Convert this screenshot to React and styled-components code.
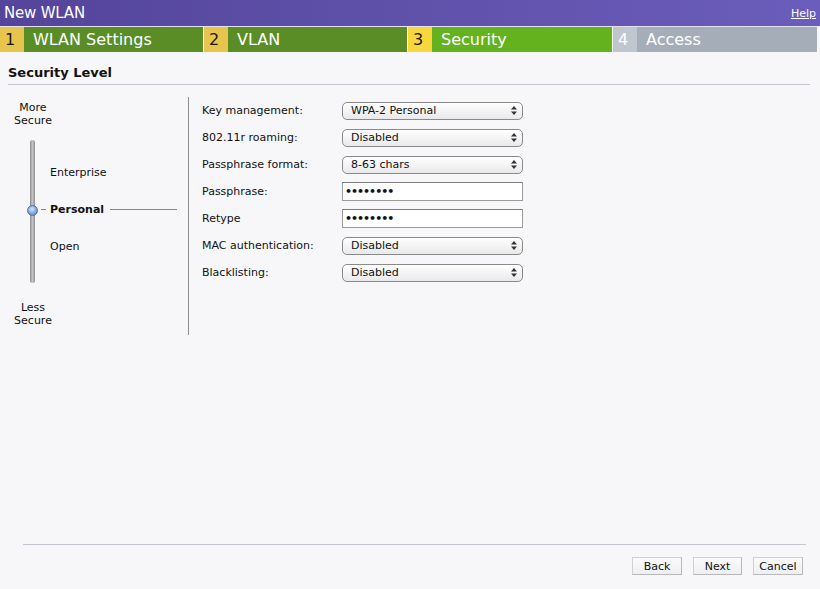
import styled, { createGlobalStyle } from 'styled-components';

const GlobalStyle = createGlobalStyle`
    html, body {
        margin: 0;
        padding: 0;
        background: #f7f7f9;
    }
    body {
        font-family: 'DejaVu Sans', Verdana, sans-serif;
        color: #111;
    }
`;

const Page = styled.div`
    display: flex;
    flex-direction: column;
    height: 589px;
    width: 820px;
    background: #f7f7f9;
`;

const TitleBar = styled.div`
    display: flex;
    align-items: center;
    justify-content: space-between;
    height: 26px;
    padding: 0 4px 0 4px;
    background: linear-gradient(to right, #54449a, #6b5dbb);
    border-bottom: 1px solid #e4e2ee;
    color: #fff;
`;

const Title = styled.div`
    font-size: 15px;
    letter-spacing: -0.2px;
`;

const HelpLink = styled.a`
    font-size: 11px;
    color: #fff;
    text-decoration: underline;
`;

const Steps = styled.div`
    display: grid;
    grid-template-columns: 203px 203px 204px 204px;
    column-gap: 1px;
    width: 817px;
    height: 24px;
    background: #fff;
`;

const stepColors = {
    done: { num: '#e7c44b', numText: '#1a1a1a', label: '#5b8d27' },
    active: { num: '#f7d73c', numText: '#1a1a1a', label: '#64b31e' },
    todo: { num: '#bfc6ce', numText: '#fff', label: '#a5aeb8' },
};

const Step = styled.div`
    display: flex;
    font-size: 16px;
    line-height: 25px;
    color: #fff;
    background: ${(p) => stepColors[p.$state].label};
`;

const StepNum = styled.span`
    width: 24px;
    padding-left: 5px;
    box-sizing: border-box;
    background: ${(p) => stepColors[p.$state].num};
    color: ${(p) => stepColors[p.$state].numText};
`;

const StepLabel = styled.span`
    padding-left: 9px;
`;

const Content = styled.div`
    flex: 1;
`;

const SectionTitle = styled.div`
    margin: 0 10px 0 8px;
    padding: 14px 0 3px;
    line-height: 16px;
    font-size: 13px;
    font-weight: bold;
    border-bottom: 1px solid #c3c6d2;
`;

const Main = styled.div`
    display: flex;
    margin-top: 12px;
`;

const LevelPanel = styled.div`
    display: flex;
    flex-direction: column;
    width: 188px;
    height: 238px;
    border-right: 1px solid #8c8c8c;
    font-size: 11px;
`;

const Caption = styled.div`
    width: 66px;
    text-align: center;
    line-height: 13px;
    margin-top: ${(p) => p.$top}px;
`;

const Slider = styled.div`
    display: flex;
    margin-top: 13px;
`;

const Track = styled.div`
    position: relative;
    margin-left: 30px;
    width: 5px;
    height: 143px;
    border-radius: 3px;
    background: linear-gradient(to right, #8e8e8e, #c4c4c4 50%, #8e8e8e);
`;

const Knob = styled.div`
    position: absolute;
    left: -3px;
    top: 65px;
    width: 9px;
    height: 9px;
    border-radius: 50%;
    border: 1px solid #4a6ea6;
    background: radial-gradient(circle at 45% 35%, #d6e6fb, #7ea8e3 55%, #4f7fc4);
`;

const Levels = styled.div`
    display: flex;
    flex-direction: column;
    padding-top: 14px;
`;

const Level = styled.div`
    display: flex;
    align-items: center;
    height: 37px;
    padding-left: ${(p) => (p.$active ? 6 : 15)}px;
    font-weight: ${(p) => (p.$active ? 'bold' : 'normal')};
`;

const Tick = styled.span`
    width: ${(p) => p.$w}px;
    height: 1px;
    background: #8a8a8a;
    margin: 0 ${(p) => p.$mr}px 0 ${(p) => p.$ml}px;
`;

const Form = styled.div`
    display: grid;
    grid-template-columns: 140px 181px;
    grid-auto-rows: 27px;
    align-items: center;
    margin-left: 13px;
    margin-top: 0;
    font-size: 11px;
`;

const Select = styled.div`
    display: flex;
    align-items: center;
    justify-content: space-between;
    height: 18px;
    box-sizing: border-box;
    padding: 0 5px 0 8px;
    border: 1px solid #8a8a8a;
    border-radius: 5px;
    background: linear-gradient(#ffffff, #e9e9eb);
    color: #111;
`;

const TextBox = styled.div`
    height: 19px;
    box-sizing: border-box;
    padding-left: 2px;
    border: 1px solid #9a9a9a;
    border-top-color: #7c7c7c;
    background: #fff;
    font-size: 11px;
    line-height: 17px;
    font-weight: bold;
    letter-spacing: -1px;
`;

const Footer = styled.div`
    display: flex;
    justify-content: flex-end;
    gap: 11px;
    margin: 0 14px 0 23px;
    padding: 12px 3px 14px 0;
    border-top: 1px solid #c3c6d2;
`;

const Button = styled.button`
    width: ${(p) => p.$w}px;
    height: 18px;
    padding: 0;
    font-family: 'DejaVu Sans', Verdana, sans-serif;
    font-size: 11px;
    color: #111;
    background: linear-gradient(#fbfbfc, #eeeff2);
    border: 1px solid #d0d0d4;
    border-bottom-color: #b8b8bc;
    border-right-color: #b8b8bc;
`;

function Arrows() {
    return (
        <svg width="6" height="9" viewBox="0 0 6 9">
            <path d="M3 0 L6 3.5 L0 3.5 Z" fill="#333" />
            <path d="M3 9 L6 5.5 L0 5.5 Z" fill="#333" />
        </svg>
    );
}

const steps = [
    { n: 1, label: 'WLAN Settings', state: 'done' },
    { n: 2, label: 'VLAN', state: 'done' },
    { n: 3, label: 'Security', state: 'active' },
    { n: 4, label: 'Access', state: 'todo' },
];

const fields = [
    { label: 'Key management:', value: 'WPA-2 Personal' },
    { label: '802.11r roaming:', value: 'Disabled' },
    { label: 'Passphrase format:', value: '8-63 chars' },
    { label: 'Passphrase:', secret: true },
    { label: 'Retype', secret: true },
    { label: 'MAC authentication:', value: 'Disabled' },
    { label: 'Blacklisting:', value: 'Disabled' },
];

function App() {
    return (
        <>
            <GlobalStyle />
            <Page>
                <TitleBar>
                    <Title>New WLAN</Title>
                    <HelpLink href="#">Help</HelpLink>
                </TitleBar>
                <Steps>
                    {steps.map((s) => (
                        <Step key={s.n} $state={s.state}>
                            <StepNum $state={s.state}>{s.n}</StepNum>
                            <StepLabel>{s.label}</StepLabel>
                        </Step>
                    ))}
                </Steps>
                <Content>
                    <SectionTitle>Security Level</SectionTitle>
                    <Main>
                        <LevelPanel>
                            <Caption $top={4}>More<br />Secure</Caption>
                            <Slider>
                                <Track>
                                    <Knob />
                                </Track>
                                <Levels>
                                    <Level>Enterprise</Level>
                                    <Level $active>
                                        <Tick $w={5} $ml={0} $mr={4} />
                                        Personal
                                        <Tick $w={67} $ml={6} $mr={0} />
                                    </Level>
                                    <Level>Open</Level>
                                </Levels>
                            </Slider>
                            <Caption $top={18}>Less<br />Secure</Caption>
                        </LevelPanel>
                        <Form>
                            {fields.map((f) => [
                                <span key={f.label + '-l'}>{f.label}</span>,
                                f.secret ? (
                                    <TextBox key={f.label + '-v'}>••••••••</TextBox>
                                ) : (
                                    <Select key={f.label + '-v'}>
                                        {f.value}
                                        <Arrows />
                                    </Select>
                                ),
                            ])}
                        </Form>
                    </Main>
                </Content>
                <Footer>
                    <Button $w={50}>Back</Button>
                    <Button $w={49}>Next</Button>
                    <Button $w={50}>Cancel</Button>
                </Footer>
            </Page>
        </>
    );
}

export default App;
